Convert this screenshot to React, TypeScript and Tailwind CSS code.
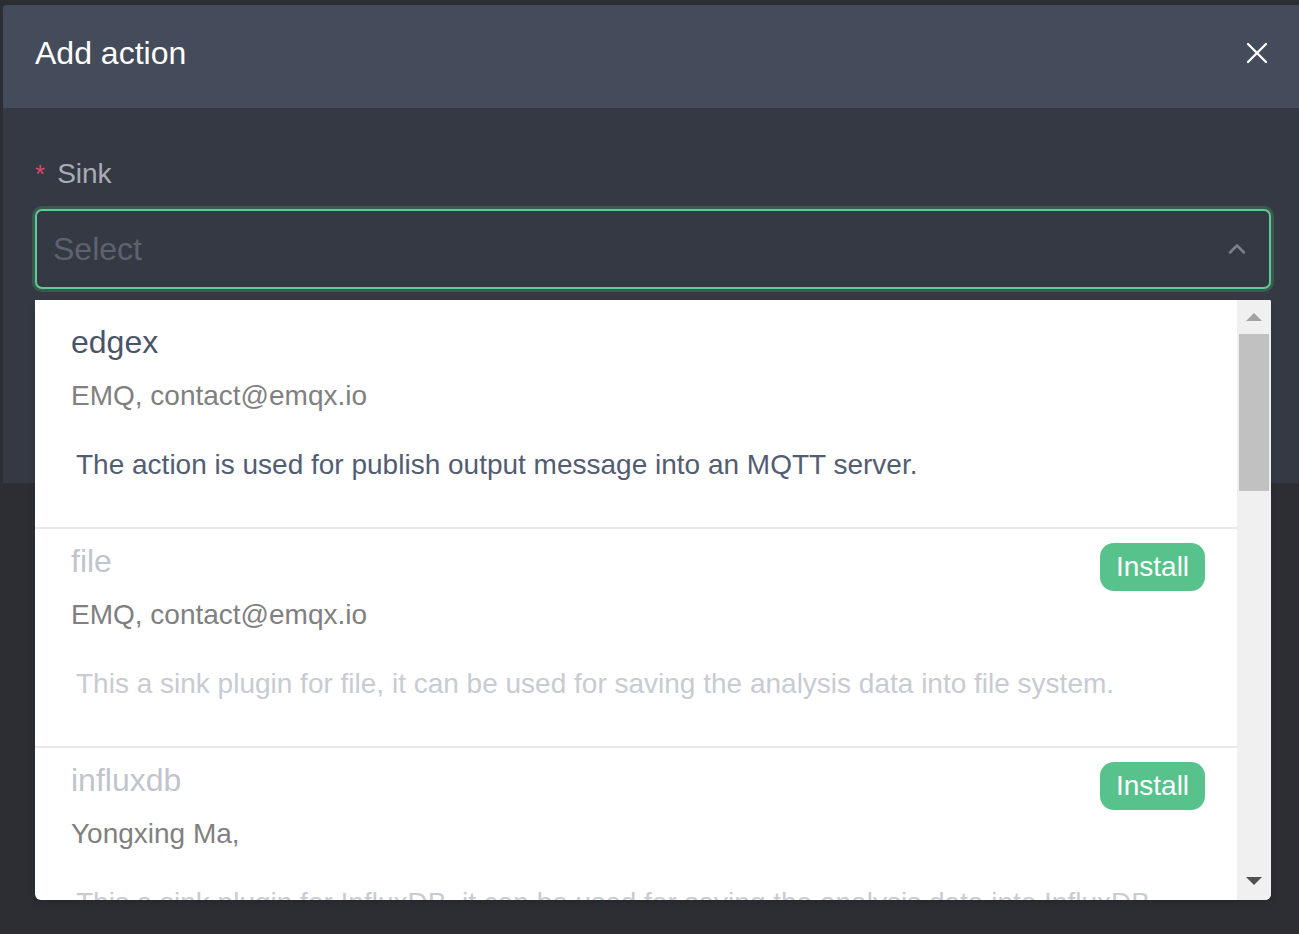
import { X, ChevronUp } from 'lucide-react';

type Sink = {
  name: string;
  author: string;
  desc: string;
  installed: boolean;
};

const sinks: Sink[] = [
  {
    name: 'edgex',
    author: 'EMQ, contact@emqx.io',
    desc: 'The action is used for publish output message into an MQTT server.',
    installed: true,
  },
  {
    name: 'file',
    author: 'EMQ, contact@emqx.io',
    desc: 'This a sink plugin for file, it can be used for saving the analysis data into file system.',
    installed: false,
  },
  {
    name: 'influxdb',
    author: 'Yongxing Ma,',
    desc: 'This a sink plugin for InfluxDB, it can be used for saving the analysis data into InfluxDB.',
    installed: false,
  },
];

const SinkOption = ({ item }: { item: Sink }) => (
  <div className="h-[219px] shrink-0 border-b-2 border-[#e9e9eb] pl-[36px] pr-[32px] pt-[12px]">
    <div className="flex h-[40px] items-start justify-between">
      <span
        className={`text-[32px] leading-[40px] ${item.installed ? 'text-[#4a5468]' : 'text-[#c0c4cc]'}`}
      >
        {item.name}
      </span>
      {!item.installed && (
        <button className="mt-[2px] h-[48px] w-[105px] rounded-[14px] bg-[#57c28b] text-[28px] leading-[48px] text-white">
          Install
        </button>
      )}
    </div>
    <div className="mt-[14px] h-[40px] text-[28px] leading-[40px] text-[#808080]">{item.author}</div>
    <div
      className={`mt-[29px] h-[40px] whitespace-nowrap pl-[5px] text-[28px] leading-[40px] ${item.installed ? 'text-[#525d72]' : 'text-[#c8cbd2]'}`}
    >
      {item.desc}
    </div>
  </div>
);

export default function App() {
  return (
    <div
      className="relative min-h-screen overflow-hidden bg-[#2d2e33] pl-[3px] pt-[5px]"
      style={{ fontFamily: '"Liberation Sans", Arial, sans-serif' }}
    >
      {/* Modal */}
      <div className="flex h-[478px] w-[1300px] flex-col overflow-hidden rounded-tl-[4px] bg-[#353943]">
        <div className="flex h-[103px] shrink-0 items-center justify-between bg-[#444b5a] pb-[8px] pl-[32px] pr-[28px]">
          <h2 className="text-[32px] leading-none text-white">Add action</h2>
          <X className="h-[36px] w-[36px] text-white" strokeWidth={1.5} />
        </div>
        <div className="px-[32px] pt-[50px]">
          <label className="flex h-[32px] items-center text-[28px] text-[#a9acb6]">
            <span className="mr-[12px] text-[26px] text-[#d6486f]">*</span>
            Sink
          </label>
          <div className="mt-[19px] flex h-[80px] items-center justify-between rounded-[7px] border-2 border-[#5dcb93] bg-[#353943] pl-[16px] pr-[18px] shadow-[0_0_0_3px_#3b5a4f]">
            <span className="text-[32px] text-[#5e626e]">Select</span>
            <ChevronUp className="h-[28px] w-[28px] text-[#7b7f8a]" strokeWidth={2.2} />
          </div>
        </div>
      </div>

      {/* Dropdown menu */}
      <div className="absolute left-[35px] top-[300px] flex h-[600px] w-[1236px] overflow-hidden rounded-b-[6px] rounded-tr-[2px] bg-white shadow-md">
        <div className="flex flex-1 flex-col overflow-hidden pt-[10px]">
          {sinks.map((s) => (
            <SinkOption key={s.name} item={s} />
          ))}
        </div>
        <div className="flex w-[34px] shrink-0 flex-col bg-[#f0f0f0]">
          <div className="flex h-[34px] items-center justify-center">
            <div className="h-0 w-0 border-x-[8px] border-b-[8px] border-x-transparent border-b-[#a3a3a3]" />
          </div>
          <div className="mx-[2px] h-[157px] bg-[#c1c1c1]" />
          <div className="flex-1" />
          <div className="flex h-[38px] items-center justify-center">
            <div className="h-0 w-0 border-x-[8px] border-t-[8px] border-x-transparent border-t-[#505050]" />
          </div>
        </div>
      </div>
    </div>
  );
}
